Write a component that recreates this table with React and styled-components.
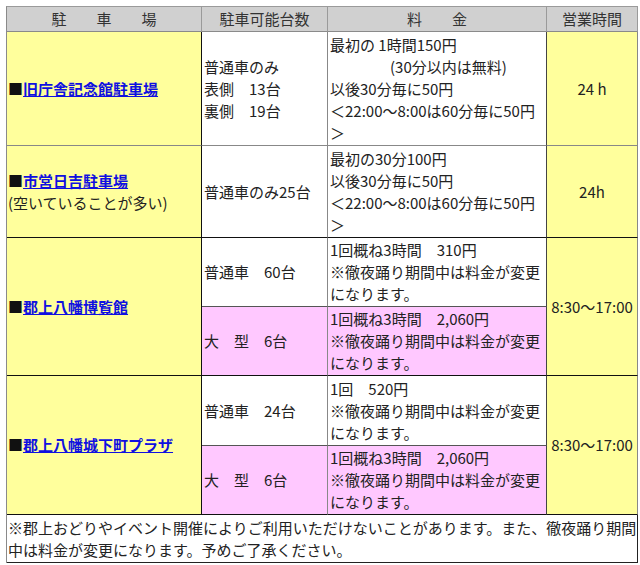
import React from 'react';
import styled, { createGlobalStyle } from 'styled-components';

const GlobalStyle = createGlobalStyle`
  * {
    box-sizing: border-box;
  }
  body {
    margin: 0;
    background: #ffffff;
    font-family: "Noto Sans CJK JP", "Noto Sans", sans-serif;
    color: #222;
  }
`;

const Page = styled.div`
  padding: 6px 0 0 6px;
`;

const Table = styled.table`
  width: 631px;
  table-layout: fixed;
  border-collapse: separate;
  border-spacing: 0;
  border-top: 1px solid #9a9a9a;
  border-left: 1px solid #8a8a8a;
  font-size: 15px;
  line-height: 22px;
`;

const HeadCell = styled.th`
  height: 25px;
  padding: 0;
  background: #d0d0d0;
  color: #333;
  font-weight: normal;
  text-align: center;
  vertical-align: middle;
  border-right: 1px solid #9a9a9a;
  border-bottom: 1px solid #8a8a8a;
  white-space: pre;
`;

const Cell = styled.td`
  height: ${(p) => p.$h}px;
  padding: 0 0 0 ${(p) => (p.$center ? 0 : 2)}px;
  background: ${(p) => p.$bg || '#ffffff'};
  text-align: ${(p) => (p.$center ? 'center' : 'left')};
  vertical-align: middle;
  border-right: 1px solid ${(p) => p.$rb || '#888'};
  border-bottom: 1px solid ${(p) => p.$bb || '#888'};
  white-space: nowrap;
  overflow: hidden;
`;

const NameCell = styled(Cell)`
  padding-left: 1px;
`;

const Line = styled.div`
  white-space: pre;
`;

const Mark = styled.span`
  color: #111;
`;

const Name = styled.a`
  color: #1010e0;
  font-weight: bold;
  text-decoration: underline;
`;

const Note = styled.td`
  height: 48px;
  padding: 0 0 0 1px;
  background: #ffffff;
  vertical-align: middle;
  border-right: 1px solid #222;
  border-bottom: 1px solid #222;
`;

const YELLOW = '#ffff9c';
const PINK = '#ffc8ff';

const ChangeNote = () => (
  <>
    <Line>※徹夜踊り期間中は料金が変更</Line>
    <Line>になります。</Line>
  </>
);

const App = () => (
  <Page>
    <GlobalStyle />
    <Table>
      <colgroup>
        <col style={{ width: 195 }} />
        <col style={{ width: 126 }} />
        <col style={{ width: 219 }} />
        <col style={{ width: 91 }} />
      </colgroup>
      <thead>
        <tr>
          <HeadCell>駐　　車　　場</HeadCell>
          <HeadCell>駐車可能台数</HeadCell>
          <HeadCell>料　　金</HeadCell>
          <HeadCell>営業時間</HeadCell>
        </tr>
      </thead>
      <tbody>
        <tr>
          <NameCell $h={114} $bg={YELLOW} $rb="#111">
            <Mark>■</Mark>
            <Name href="#">旧庁舎記念館駐車場</Name>
          </NameCell>
          <Cell $h={114}>
            <Line>普通車のみ</Line>
            <Line>表側　13台</Line>
            <Line>裏側　19台</Line>
          </Cell>
          <Cell $h={114} $rb="#444">
            <Line>最初の 1時間150円</Line>
            <Line>{'　　　　(30分以内は無料)'}</Line>
            <Line>以後30分毎に50円</Line>
            <Line>＜22:00〜8:00は60分毎に50円</Line>
            <Line>＞</Line>
          </Cell>
          <Cell $h={114} $bg={YELLOW} $center>
            24 h
          </Cell>
        </tr>
        <tr>
          <NameCell $h={92} $bg={YELLOW} $rb="#111" $bb="#111">
            <Line>
              <Mark>■</Mark>
              <Name href="#">市営日吉駐車場</Name>
            </Line>
            <Line>(空いていることが多い)</Line>
          </NameCell>
          <Cell $h={92} $bb="#111">
            普通車のみ25台
          </Cell>
          <Cell $h={92} $rb="#444" $bb="#111">
            <Line>最初の30分100円</Line>
            <Line>以後30分毎に50円</Line>
            <Line>＜22:00〜8:00は60分毎に50円</Line>
            <Line>＞</Line>
          </Cell>
          <Cell $h={92} $bg={YELLOW} $center $bb="#111">
            24h
          </Cell>
        </tr>
        <tr>
          <NameCell rowSpan={2} $bg={YELLOW} $rb="#111" $bb="#111">
            <Mark>■</Mark>
            <Name href="#">郡上八幡博覧館</Name>
          </NameCell>
          <Cell $h={69} $bb="#555">
            普通車　60台
          </Cell>
          <Cell $h={69} $rb="#444" $bb="#555">
            <Line>1回概ね3時間　310円</Line>
            <ChangeNote />
          </Cell>
          <Cell rowSpan={2} $bg={YELLOW} $center $bb="#111">
            8:30〜17:00
          </Cell>
        </tr>
        <tr>
          <Cell $h={69} $bg={PINK} $bb="#111">
            大　型　6台
          </Cell>
          <Cell $h={69} $bg={PINK} $rb="#444" $bb="#111">
            <Line>1回概ね3時間　2,060円</Line>
            <ChangeNote />
          </Cell>
        </tr>
        <tr>
          <NameCell rowSpan={2} $bg={YELLOW} $rb="#111" $bb="#111">
            <Mark>■</Mark>
            <Name href="#">郡上八幡城下町プラザ</Name>
          </NameCell>
          <Cell $h={70} $bb="#555">
            普通車　24台
          </Cell>
          <Cell $h={70} $rb="#444" $bb="#555">
            <Line>1回　520円</Line>
            <ChangeNote />
          </Cell>
          <Cell rowSpan={2} $bg={YELLOW} $center $bb="#111">
            8:30〜17:00
          </Cell>
        </tr>
        <tr>
          <Cell $h={69} $bg={PINK} $bb="#111">
            大　型　6台
          </Cell>
          <Cell $h={69} $bg={PINK} $rb="#444" $bb="#111">
            <Line>1回概ね3時間　2,060円</Line>
            <ChangeNote />
          </Cell>
        </tr>
        <tr>
          <Note colSpan={4}>
            <Line>※郡上おどりやイベント開催によりご利用いただけないことがあります。また、徹夜踊り期間</Line>
            <Line>中は料金が変更になります。予めご了承ください。</Line>
          </Note>
        </tr>
      </tbody>
    </Table>
  </Page>
);

export default App;
